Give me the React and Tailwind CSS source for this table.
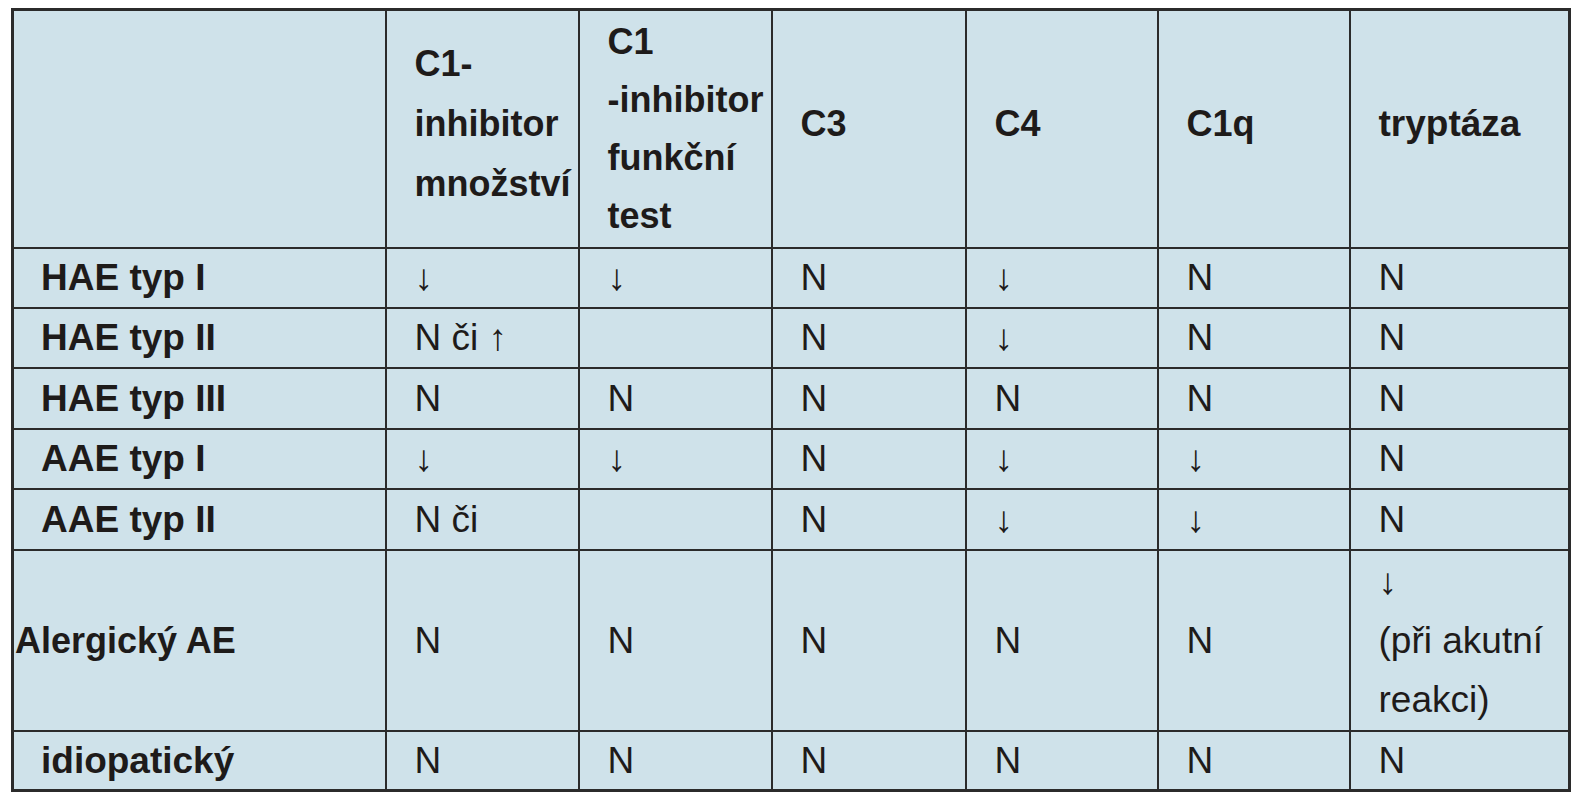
import React from "react";

const rows = [
  { label: "HAE typ I", h: "h-[60px]", cells: ["↓", "↓", "N", "↓", "N", "N"] },
  { label: "HAE typ II", h: "h-[60px]", cells: ["N či ↑", "", "N", "↓", "N", "N"] },
  { label: "HAE typ III", h: "h-[61px]", cells: ["N", "N", "N", "N", "N", "N"] },
  { label: "AAE typ I", h: "h-[60px]", cells: ["↓", "↓", "N", "↓", "↓", "N"] },
  { label: "AAE typ II", h: "h-[61px]", cells: ["N či", "", "N", "↓", "↓", "N"] },
];

const td = "border-2 border-[#2b2b2b] pl-[28px] align-middle whitespace-nowrap";
const th = "border-2 border-[#2b2b2b] pl-[28px] pb-[10px] align-middle whitespace-nowrap font-bold text-[36px] text-left";
const label = "border-2 border-[#2b2b2b] pl-[27px] align-middle whitespace-nowrap font-bold text-[37px]";

export default function App() {
  return (
    <div className="w-[1582px] h-[800px] bg-white overflow-hidden">
      <table
        className="table-fixed border-collapse border-[3px] border-[#2b2b2b] bg-[#cfe2ea] text-[#1e1b1a] ml-[11px] mt-[8px] w-[1557px] leading-[57px] text-[37px]"
        style={{ fontFamily: '"Liberation Sans", Arial, sans-serif' }}
      >
        <colgroup>
          <col className="w-[373px]" />
          <col className="w-[193px]" />
          <col className="w-[193px]" />
          <col className="w-[194px]" />
          <col className="w-[192px]" />
          <col className="w-[192px]" />
          <col className="w-[220px]" />
        </colgroup>
        <thead>
          <tr className="h-[238px]">
            <th className={th}></th>
            <th className={th + " leading-[60px]"}>
              C1-
              <br />
              inhibitor
              <br />
              množství
            </th>
            <th className={th + " !pb-0 leading-[58px]"}>
              C1
              <br />
              -inhibitor
              <br />
              funkční
              <br />
              test
            </th>
            <th className={th}>C3</th>
            <th className={th}>C4</th>
            <th className={th}>C1q</th>
            <th className={th + " text-[37px]"}>tryptáza</th>
          </tr>
        </thead>
        <tbody>
          {rows.map((r) => (
            <tr key={r.label} className={r.h}>
              <td className={label}>{r.label}</td>
              {r.cells.map((c, i) => (
                <td key={i} className={td}>
                  {c}
                </td>
              ))}
            </tr>
          ))}
          <tr className="h-[181px]">
            <td className="border-2 border-[#2b2b2b] pl-[1px] align-middle whitespace-nowrap font-bold text-[36px]">
              Alergický AE
            </td>
            <td className={td}>N</td>
            <td className={td}>N</td>
            <td className={td}>N</td>
            <td className={td}>N</td>
            <td className={td}>N</td>
            <td className={td + " leading-[59px]"}>
              ↓
              <br />
              (při akutní
              <br />
              reakci)
            </td>
          </tr>
          <tr className="h-[60px]">
            <td className={label}>idiopatický</td>
            <td className={td}>N</td>
            <td className={td}>N</td>
            <td className={td}>N</td>
            <td className={td}>N</td>
            <td className={td}>N</td>
            <td className={td}>N</td>
          </tr>
        </tbody>
      </table>
    </div>
  );
}
